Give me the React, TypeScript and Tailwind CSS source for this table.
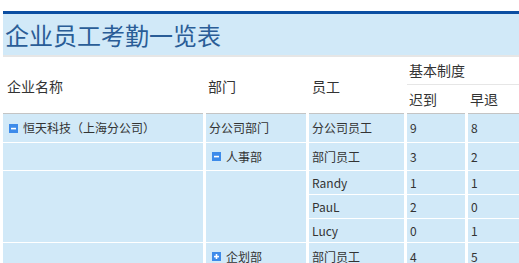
import type { ReactNode } from "react";

type Row = {
  dept?: { label: string; open: boolean };
  staff: string;
  late: number;
  early: number;
};

const rows: Row[] = [
  { dept: { label: "人事部", open: true }, staff: "部门员工", late: 3, early: 2 },
  { staff: "Randy", late: 1, early: 1 },
  { staff: "PauL", late: 2, early: 0 },
  { staff: "Lucy", late: 0, early: 1 },
  { dept: { label: "企划部", open: false }, staff: "部门员工", late: 4, early: 5 },
];

function Toggle({ open }: { open: boolean }) {
  return (
    <svg width="9" height="9" viewBox="0 0 9 9" className="shrink-0">
      <rect width="9" height="9" fill="#3d8bea" />
      <rect x="2" y="3.8" width="5" height="1.6" fill="#fff" />
      {!open && <rect x="3.7" y="2" width="1.6" height="5" fill="#fff" />}
    </svg>
  );
}

function Cell({ children, className = "" }: { children?: ReactNode; className?: string }) {
  return (
    <div className={`flex items-center bg-[#d1e9f8] pl-[3px] text-[12px] text-[#333] ${className}`}>
      {children}
    </div>
  );
}

export default function App() {
  return (
    <div
      className="h-screen overflow-hidden bg-white pl-[3px] pt-[11px]"
      style={{ fontFamily: '"Noto Sans CJK SC", "Noto Sans", sans-serif' }}
    >
      <div className="w-[560px]">
        {/* title band */}
        <div className="h-[3px] bg-[#0b4ea2]" />
        <div className="flex h-[41px] items-center bg-[#d1e9f8] pl-[2px] text-[24px] leading-none text-[#2a5d97]">
          企业员工考勤一览表
        </div>
        <div className="h-[2px] bg-[#e6e6e6]" />

        {/* column headers */}
        <div className="grid grid-cols-[200px_100px_95px_58px_58px] grid-rows-[28px_29px] gap-x-[3px] text-[14px] text-[#333]">
          <div className="row-span-2 flex items-center border-b border-[#c4c4c4] pl-[4px] pt-[2px]">企业名称</div>
          <div className="row-span-2 flex items-center border-b border-[#c4c4c4] pl-[2px] pt-[2px]">部门</div>
          <div className="row-span-2 flex items-center border-b border-[#c4c4c4] pl-[3px] pt-[2px]">员工</div>
          <div className="col-span-2 flex items-center border-b border-[#e6e6e6] pl-[2px]">基本制度</div>
          <div className="flex items-center border-b border-[#c4c4c4] pl-[2px]">迟到</div>
          <div className="flex items-center border-b border-[#c4c4c4] pl-[2px]">早退</div>
        </div>

        {/* body */}
        <div className="grid grid-cols-[200px_100px_95px_58px_58px] grid-rows-[28px_27px_23px_23px_23px_27px] gap-x-[3px] gap-y-px bg-white">
          <Cell className="gap-[5px] pl-[6px]">
            <Toggle open />
            <span>恒天科技（上海分公司）</span>
          </Cell>
          <Cell className="pl-[2px]">分公司部门</Cell>
          <Cell>分公司员工</Cell>
          <Cell>9</Cell>
          <Cell>8</Cell>

          {rows.map((r, i) => {
            const cells: ReactNode[] = [];
            if (r.dept) {
              cells.push(<Cell key={`a${i}`} />);
              cells.push(
                <Cell key={`b${i}`} className="gap-[5px] pl-[6px]">
                  <Toggle open={r.dept.open} />
                  <span>{r.dept.label}</span>
                </Cell>
              );
            } else if (i === 1) {
              cells.push(<Cell key={`a${i}`} className="row-span-3" />);
              cells.push(<Cell key={`b${i}`} className="row-span-3" />);
            }
            cells.push(<Cell key={`c${i}`}>{r.staff}</Cell>);
            cells.push(<Cell key={`d${i}`}>{r.late}</Cell>);
            cells.push(<Cell key={`e${i}`}>{r.early}</Cell>);
            return cells;
          })}
        </div>
      </div>
    </div>
  );
}
